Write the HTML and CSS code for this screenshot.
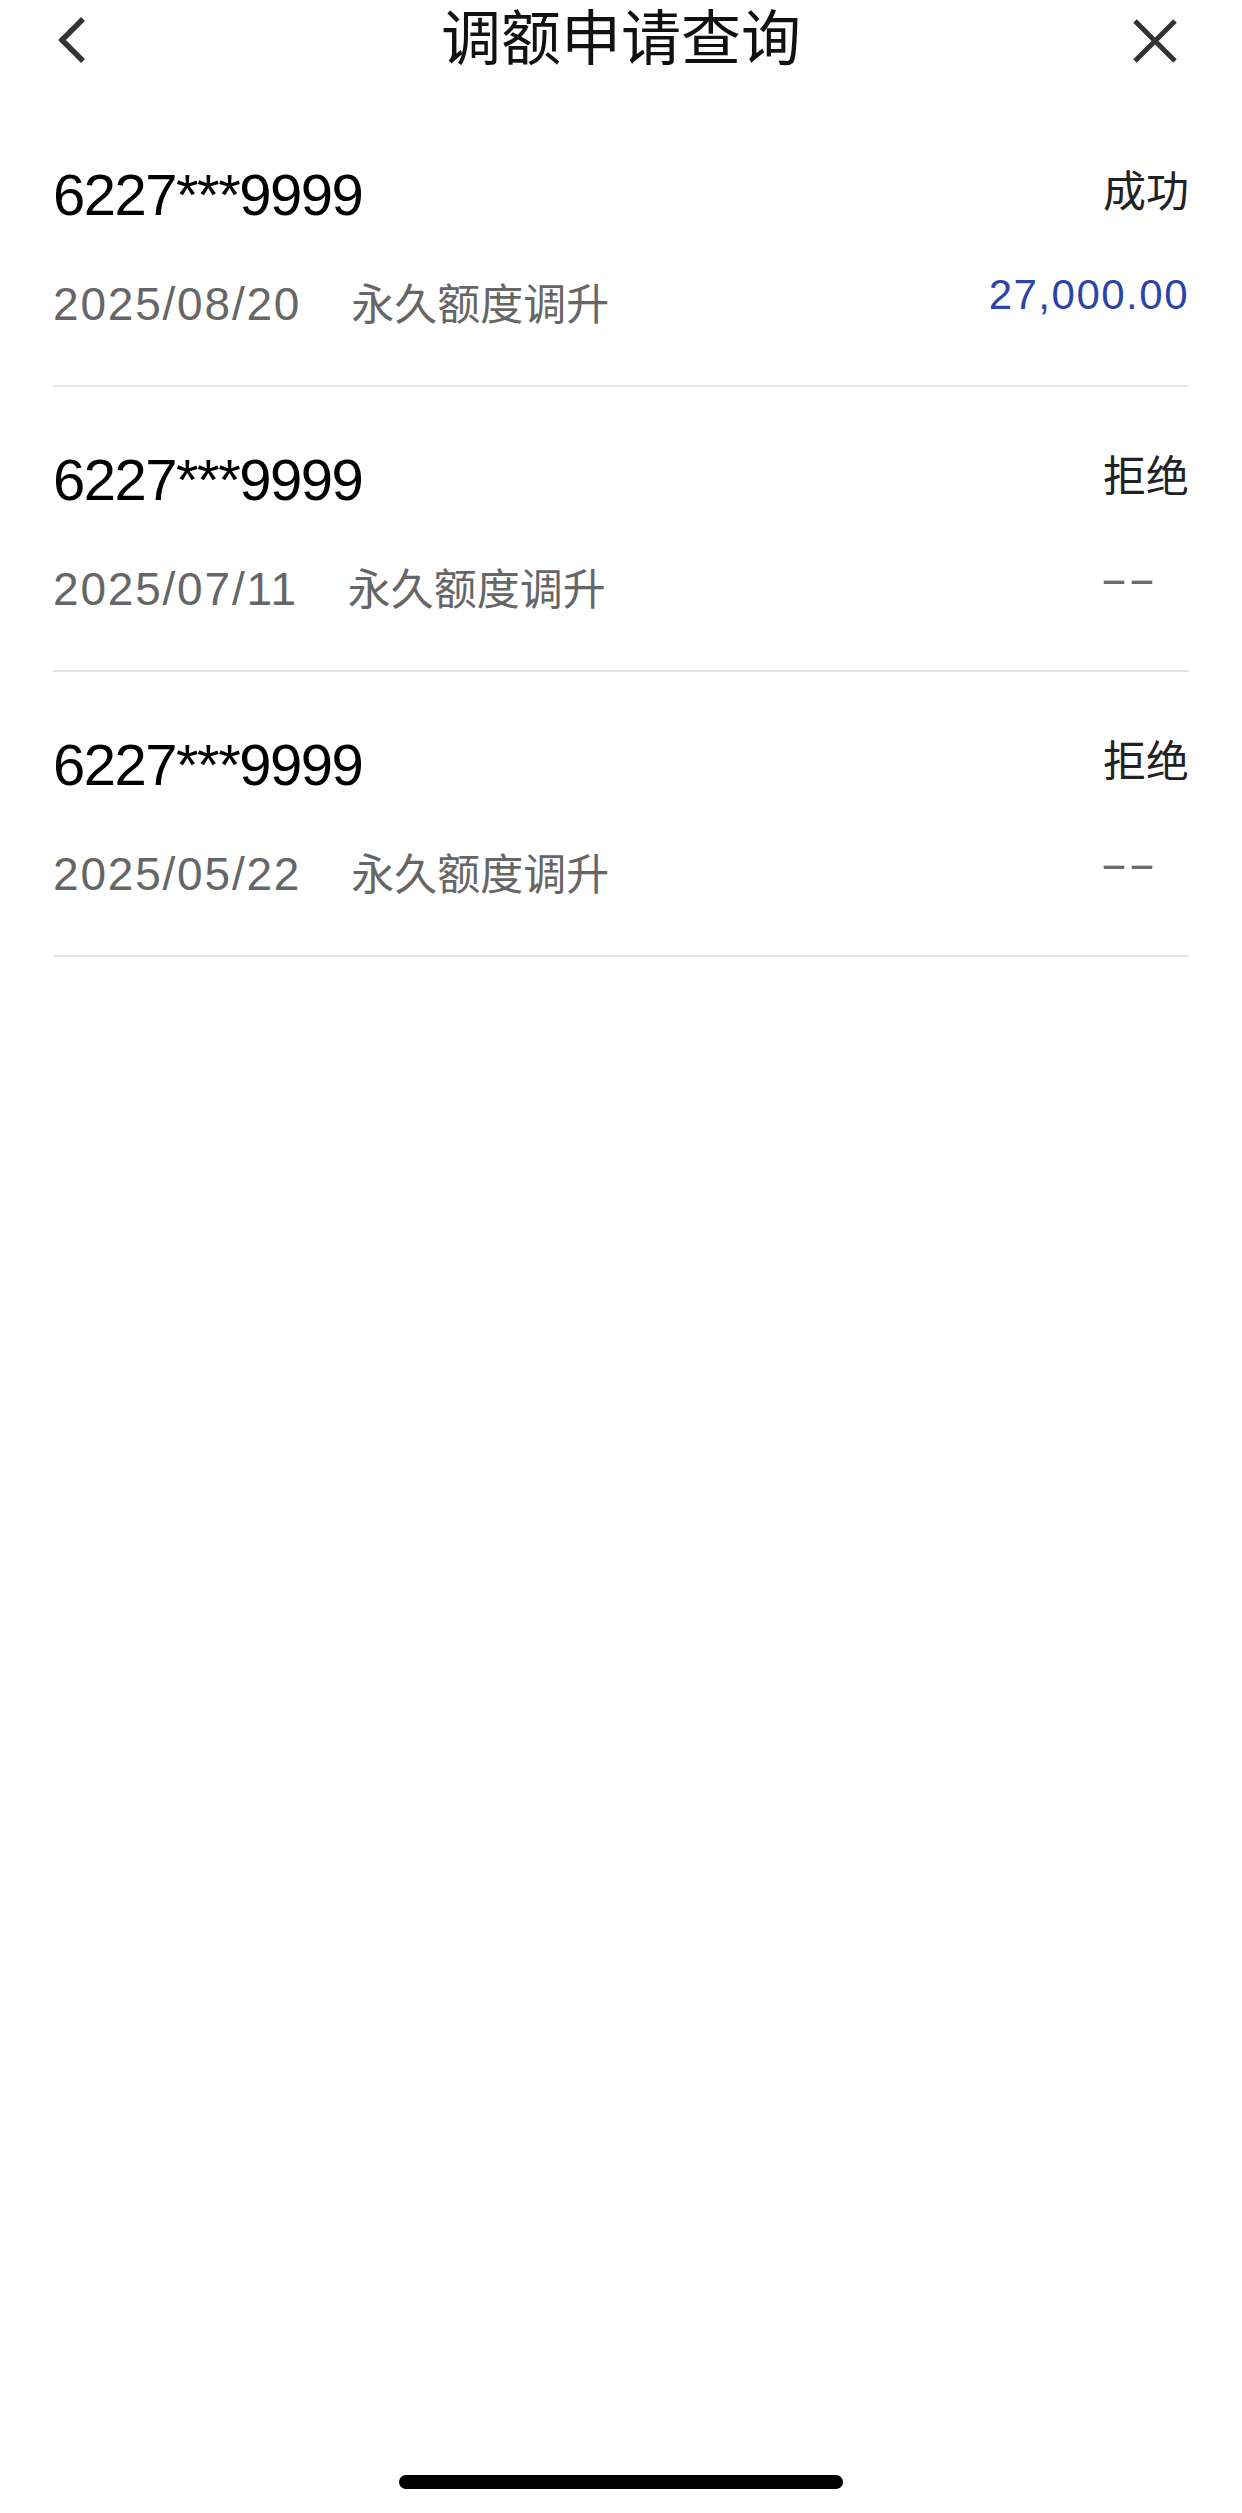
FILE: index.html
```html
<!DOCTYPE html>
<html lang="zh-CN">
<head>
    <meta charset="UTF-8">
    <meta name="viewport" content="width=device-width, initial-scale=1.0">
    <title>调额申请查询</title>
    <link rel="stylesheet" href="styles.css">
</head>
<body>
    <div class="screen">
        <header class="nav">
            <a class="nav-back" href="#">
                <svg width="40" height="50" viewBox="0 0 40 50">
                    <path d="M31 4 L10 25 L31 46" fill="none" stroke="#333" stroke-width="5.5"/>
                </svg>
            </a>
            <h1 class="nav-title">调额申请查询</h1>
            <a class="nav-close" href="#">
                <svg width="50" height="50" viewBox="0 0 50 50">
                    <path d="M5 6 L45 46 M45 6 L5 46" fill="none" stroke="#333" stroke-width="5"/>
                </svg>
            </a>
        </header>

        <ul class="records">
            <li class="record">
                <div class="record-main">
                    <div class="card-no">6227***9999</div>
                    <div class="record-meta"><span class="date">2025/08/20</span><span class="type">永久额度调升</span></div>
                </div>
                <div class="record-side">
                    <div class="status">成功</div>
                    <div class="amount">27,000.00</div>
                </div>
            </li>
            <li class="record">
                <div class="record-main">
                    <div class="card-no">6227***9999</div>
                    <div class="record-meta"><span class="date">2025/07/11</span><span class="type">永久额度调升</span></div>
                </div>
                <div class="record-side">
                    <div class="status">拒绝</div>
                    <div class="amount empty"><span>--</span></div>
                </div>
            </li>
            <li class="record">
                <div class="record-main">
                    <div class="card-no">6227***9999</div>
                    <div class="record-meta"><span class="date">2025/05/22</span><span class="type">永久额度调升</span></div>
                </div>
                <div class="record-side">
                    <div class="status">拒绝</div>
                    <div class="amount empty"><span>--</span></div>
                </div>
            </li>
        </ul>

        <div class="home-bar"></div>
    </div>
</body>
</html>
```

FILE: styles.css
```css
body {
    font-family: "Liberation Sans", "Noto Sans CJK SC", sans-serif;
    background-color: #fff;
    color: #222;
    margin: 0;
    padding: 0;
}
.screen {
    min-height: 100vh;
    display: flex;
    flex-direction: column;
}
.nav {
    display: grid;
    grid-template-columns: 1fr auto 1fr;
    align-items: center;
    height: 80px;
}
.nav a {
    display: block;
}
.nav svg {
    display: block;
}
.nav-back {
    justify-self: start;
    margin-left: 52px;
}
.nav-close {
    justify-self: end;
    margin-right: 62px;
}
.nav-title {
    margin: 0;
    font-size: 60px;
    font-weight: 400;
    line-height: 80px;
    color: #111;
}
.records {
    list-style: none;
    margin: 22px 53px 0;
    padding: 0;
}
.record {
    display: flex;
    justify-content: space-between;
    height: 283px;
    border-bottom: 2px solid #e4e4e4;
}
.record-main {
    padding-top: 58px;
}
.card-no {
    font-size: 58px;
    line-height: 70px;
    letter-spacing: -1.5px;
    color: #000;
}
.record-meta {
    margin-top: 46px;
    font-size: 46px;
    line-height: 56px;
    color: #666;
}
.date {
    letter-spacing: 1.8px;
}
.type {
    font-size: 43px;
    margin-left: 50px;
}
.record-side {
    display: flex;
    flex-direction: column;
    align-items: flex-end;
    padding-top: 62px;
}
.status {
    font-size: 43px;
    line-height: 56px;
    color: #222;
}
.amount {
    margin-top: 47px;
    font-size: 42px;
    line-height: 56px;
    letter-spacing: 1.5px;
    color: #2c44a6;
}
.amount.empty {
    color: #6a6a6a;
    letter-spacing: 0;
    margin-right: 61px;
}
.amount.empty span {
    display: inline-block;
    transform: scaleX(2);
    transform-origin: left center;
}
.home-bar {
    width: 444px;
    height: 14px;
    border-radius: 7px;
    background-color: #000;
    margin: auto auto 24px;
}
```
